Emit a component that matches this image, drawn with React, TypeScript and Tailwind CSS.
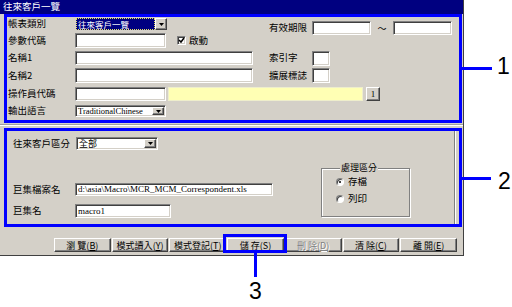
import React from "react";

const sunken =
  "bg-white border border-t-[#808080] border-l-[#808080] border-b-white border-r-white shadow-[inset_1px_1px_0_#404040,inset_-1px_-1px_0_#d4d0c8]";
const raised =
  "bg-[#d4d0c8] border border-t-white border-l-white border-b-[#404040] border-r-[#404040] shadow-[inset_-1px_-1px_0_#808080]";

function DropBtn() {
  return (
    <div className={`${raised} w-[12px] h-full shrink-0 flex items-center justify-center`}>
      <svg width="5" height="3" viewBox="0 0 5 3">
        <polygon points="0,0 5,0 2.5,3" fill="#000" />
      </svg>
    </div>
  );
}

function Label({ w, children }: { w: string; children: React.ReactNode }) {
  return <span className={`${w} shrink-0 text-[9.5px] leading-none whitespace-nowrap`}>{children}</span>;
}

function Btn({ label, k, disabled }: { label: string; k: string; disabled?: boolean }) {
  return (
    <div
      className={`${raised} h-[14px] flex items-center justify-center text-[9px] leading-none whitespace-nowrap ${
        disabled ? "text-[#808080] [text-shadow:1px_1px_0_#fff]" : "text-black"
      }`}
    >
      {label}(<u>{k}</u>)
    </div>
  );
}

function Radio({ on }: { on?: boolean }) {
  return (
    <div className="w-[8px] h-[8px] rounded-full bg-white border border-t-[#808080] border-l-[#808080] border-b-white border-r-white shadow-[inset_1px_1px_0_#404040] flex items-center justify-center shrink-0">
      {on && <div className="w-[2px] h-[2px] rounded-full bg-black" />}
    </div>
  );
}

export default function App() {
  return (
    <div className="relative w-[512px] h-[307px] bg-white overflow-hidden font-['Noto_Sans_CJK_TC','Noto_Sans_CJK_SC',sans-serif] text-black">
      <div className="w-[464px] h-[256px] bg-[#d4d0c8] border-r border-b border-r-[#404040] border-b-[#404040] flex flex-col">
        {/* title */}
        <div className="h-[14px] bg-[#000080] text-white text-[9.5px] leading-none flex items-center pl-[3px] shrink-0">
          往來客戶一覽
        </div>

        {/* Box 1 */}
        <div className="ml-[4px] w-[458px] h-[109px] border-[3px] border-[#0000ff] pl-px pt-px flex flex-col shrink-0">
          <div className="flex h-[31px]">
            <div className="w-[261px] flex flex-col">
              <div className="h-[12px] flex items-center">
                <Label w="w-[68px]">帳表類別</Label>
                <div className="w-[91px] h-[12px] flex bg-white">
                  <div className="flex-1 bg-[#000080] text-white text-[8.5px] leading-none flex items-center pl-[2px] outline-1 outline-dotted outline-[#e8e060] -outline-offset-1 overflow-hidden whitespace-nowrap">
                    往來客戶一覽
                  </div>
                  <DropBtn />
                </div>
              </div>
              <div className="mt-[3px] h-[15px] flex items-center">
                <Label w="w-[67px]">參數代碼</Label>
                <div className={`${sunken} w-[91px] h-[15px]`} />
                <div className={`${sunken} ml-[11px] w-[9px] h-[9px] flex items-center justify-center`}>
                  <svg width="7" height="7" viewBox="0 0 7 7">
                    <path d="M1 3 L3 5 L6 1" stroke="#000" strokeWidth="1.5" fill="none" />
                  </svg>
                </div>
                <span className="ml-[3px] text-[9.5px] leading-none">啟動</span>
              </div>
            </div>
            <div className="pt-[3px]">
              <div className="h-[14px] flex items-center">
                <Label w="w-[43px]">有效期限</Label>
                <div className={`${sunken} w-[59px] h-[14px]`} />
                <span className="w-[22px] text-center text-[9px] leading-none">～</span>
                <div className={`${sunken} w-[59px] h-[14px]`} />
              </div>
            </div>
          </div>

          <div className="mt-[2px] h-[14px] flex items-center">
            <Label w="w-[67px]">名稱1</Label>
            <div className={`${sunken} w-[178px] h-[14px]`} />
            <span className="ml-[16px] w-[43px] text-[9.5px] leading-none">索引字</span>
            <div className={`${sunken} w-[18px] h-[15px]`} />
          </div>
          <div className="mt-[3px] h-[15px] flex items-center">
            <Label w="w-[67px]">名稱2</Label>
            <div className={`${sunken} w-[178px] h-[15px]`} />
            <span className="ml-[16px] w-[43px] text-[9.5px] leading-none">擴展標誌</span>
            <div className={`${sunken} w-[18px] h-[15px]`} />
          </div>
          <div className="mt-[4px] h-[14px] flex items-center">
            <Label w="w-[67px]">操作員代碼</Label>
            <div className={`${sunken} w-[91px] h-[14px]`} />
            <div className="ml-[2px] w-[195px] h-[14px] bg-[#ffffb4] border border-[#eeeecc]" />
            <div className={`${raised} ml-[3px] w-[14px] h-[14px] flex items-center justify-center text-[9px] leading-none font-['Liberation_Serif',serif]`}>
              1
            </div>
          </div>
          <div className="mt-[4px] h-[12px] flex items-center">
            <Label w="w-[67px]">輸出語言</Label>
            <div className={`${sunken} w-[91px] h-[12px] flex`}>
              <div className="flex-1 text-[8.5px] leading-none flex items-center pl-[2px] font-['Liberation_Serif',serif]">
                TraditionalChinese
              </div>
              <div className="py-px pr-px h-full">
                <DropBtn />
              </div>
            </div>
          </div>
        </div>

        {/* separator */}
        <div className="h-[5px] pt-px flex flex-col shrink-0">
          <div className="h-px bg-[#a0a0a0]" />
          <div className="h-px bg-white" />
        </div>

        {/* Box 2 */}
        <div className="ml-[4px] w-[458px] h-[99px] border-[3px] border-[#0000ff] flex shrink-0">
          <div className="w-[448px] border-r border-r-[#808080] pl-[6px] flex flex-col">
            <div className="mt-[6px] h-[13px] flex items-center">
              <Label w="w-[63px]">往來客戶區分</Label>
              <div className={`${sunken} w-[82px] h-[13px] flex`}>
                <div className="flex-1 text-[9px] leading-none flex items-center pl-[2px]">全部</div>
                <div className="py-px pr-px h-full">
                  <DropBtn />
                </div>
              </div>
            </div>
            <div className="flex">
              <div className="w-[260px] flex flex-col">
                <div className="mt-[33px] h-[13px] flex items-center">
                  <Label w="w-[62px]">巨集檔案名</Label>
                  <div className={`${sunken} w-[198px] h-[13px] flex items-center pl-[2px] text-[9px] leading-none font-['Liberation_Serif',serif] whitespace-nowrap overflow-hidden`}>
                    d:\asia\Macro\MCR_MCM_Correspondent.xls
                  </div>
                </div>
                <div className="mt-[8px] h-[14px] flex items-center">
                  <Label w="w-[62px]">巨集名</Label>
                  <div className={`${sunken} w-[96px] h-[14px] flex items-center pl-[2px] text-[9px] leading-none font-['Liberation_Serif',serif]`}>
                    macro1
                  </div>
                </div>
              </div>
              <fieldset className="ml-[48px] mt-[13px] w-[89px] h-[54px] border border-[#808080] shadow-[inset_1px_1px_0_#fff,1px_1px_0_#fff] pl-[14px]">
                <legend className="ml-[4px] px-px bg-[#d4d0c8] text-[9px] leading-[10px]">處理區分</legend>
                <div className="mt-[4px] h-[10px] flex items-center">
                  <Radio on />
                  <span className="ml-[4px] text-[9.5px] leading-none">存檔</span>
                </div>
                <div className="mt-[7px] h-[10px] flex items-center">
                  <Radio />
                  <span className="ml-[4px] text-[9.5px] leading-none">列印</span>
                </div>
              </fieldset>
            </div>
          </div>
          <div className="w-px bg-white" />
        </div>

        {/* buttons */}
        <div className="mt-[11px] ml-[54px] w-[403px] grid grid-cols-7 gap-px shrink-0">
          <Btn label="瀏 覽" k="B" />
          <Btn label="模式讀入" k="Y" />
          <Btn label="模式登記" k="T" />
          <Btn label="儲 存" k="S" />
          <Btn label="刪 除" k="D" disabled />
          <Btn label="清 除" k="C" />
          <Btn label="離 開" k="E" />
        </div>
      </div>

      {/* callouts */}
      <div className="absolute left-[223px] top-[234px] w-[64px] h-[19px] border-[3px] border-[#0000ff]" />
      <div className="absolute left-[462px] top-[67px] w-[30px] h-[3px] bg-[#0000ff]" />
      <div className="absolute left-[462px] top-[177px] w-[29px] h-[3px] bg-[#0000ff]" />
      <div className="absolute left-[254px] top-[253px] w-[3px] h-[24px] bg-[#0000ff]" />
      <div className="absolute left-[497px] top-[55px] text-[23px] leading-none font-['Liberation_Sans',sans-serif]">1</div>
      <div className="absolute left-[498px] top-[170px] text-[23px] leading-none font-['Liberation_Sans',sans-serif]">2</div>
      <div className="absolute left-[249px] top-[280px] text-[23px] leading-none font-['Liberation_Sans',sans-serif]">3</div>
    </div>
  );
}
